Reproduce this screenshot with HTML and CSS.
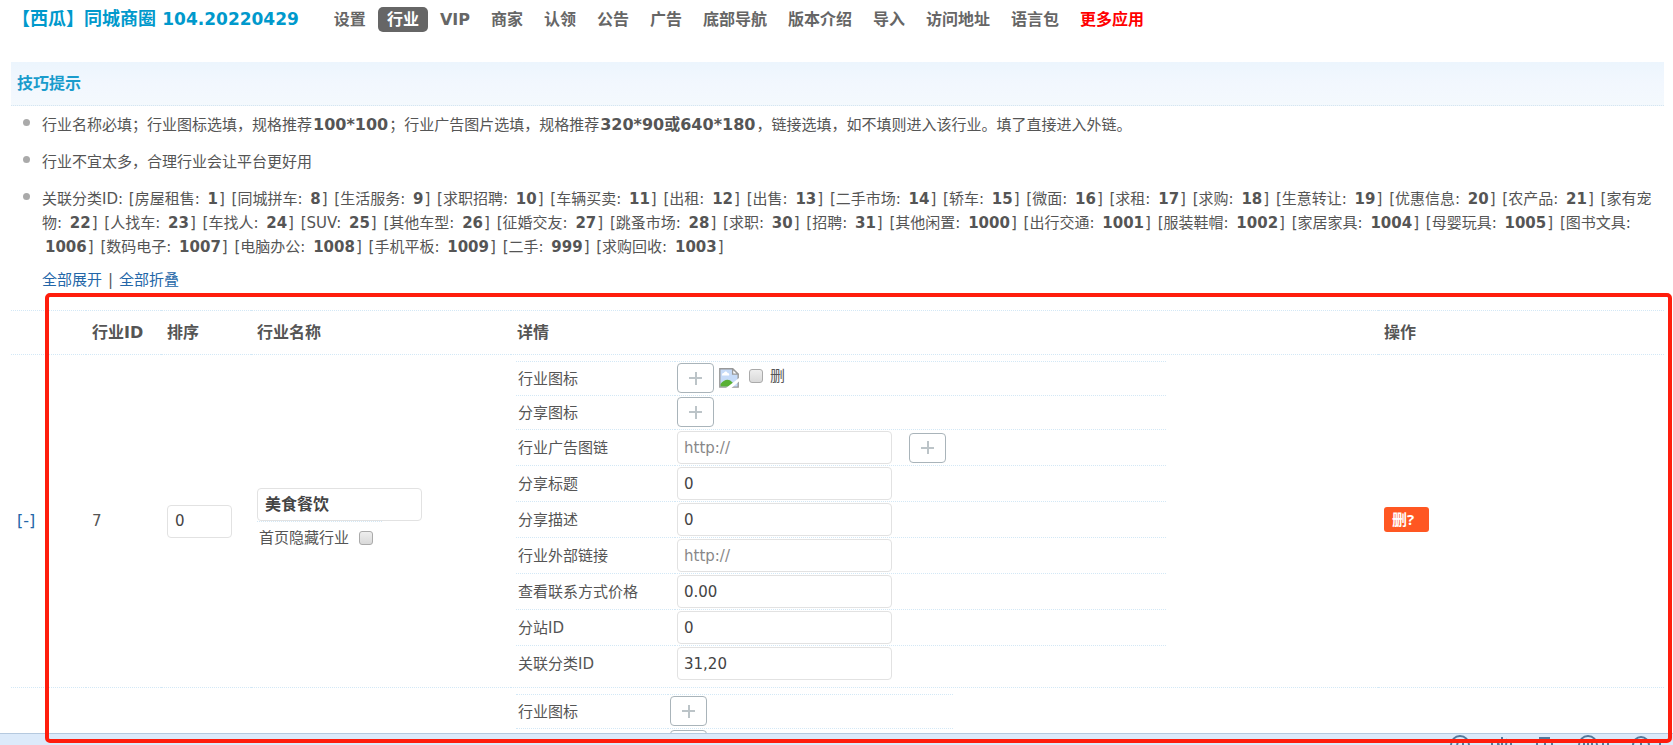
FILE: index.html
```html
<!DOCTYPE html>
<html lang="zh-CN">
<head>
<meta charset="utf-8">
<title>【西瓜】同城商圈</title>
<link rel="stylesheet" href="styles.css">
</head>
<body>
<header class="top">
  <h1 class="title">【西瓜】同城商圈 <span class="version">104.20220429</span></h1>
  <nav class="nav">
    <a href="#">设置</a><a href="#" class="current">行业</a><a href="#">VIP</a><a href="#">商家</a><a href="#">认领</a><a href="#">公告</a><a href="#">广告</a><a href="#">底部导航</a><a href="#">版本介绍</a><a href="#">导入</a><a href="#">访问地址</a><a href="#">语言包</a><a href="#" class="more">更多应用</a>
  </nav>
</header>
<main class="main">
  <h2 class="tips-head">技巧提示</h2>
  <ul class="tips">
    <li>行业名称必填；行业图标选填，规格推荐<b class="size">100*100</b>；行业广告图片选填，规格推荐<b class="size">320*90或640*180</b>，链接选填，如不填则进入该行业。填了直接进入外链。</li>
    <li>行业不宜太多，合理行业会让平台更好用</li>
    <li>关联分类ID:
      <span>[房屋租售: <b>1</b>]</span>
      <span>[同城拼车: <b>8</b>]</span>
      <span>[生活服务: <b>9</b>]</span>
      <span>[求职招聘: <b>10</b>]</span>
      <span>[车辆买卖: <b>11</b>]</span>
      <span>[出租: <b>12</b>]</span>
      <span>[出售: <b>13</b>]</span>
      <span>[二手市场: <b>14</b>]</span>
      <span>[轿车: <b>15</b>]</span>
      <span>[微面: <b>16</b>]</span>
      <span>[求租: <b>17</b>]</span>
      <span>[求购: <b>18</b>]</span>
      <span>[生意转让: <b>19</b>]</span>
      <span>[优惠信息: <b>20</b>]</span>
      <span>[农产品: <b>21</b>]</span>
      <span>[家有宠物: <b>22</b>]</span>
      <span>[人找车: <b>23</b>]</span>
      <span>[车找人: <b>24</b>]</span>
      <span>[SUV: <b>25</b>]</span>
      <span>[其他车型: <b>26</b>]</span>
      <span>[征婚交友: <b>27</b>]</span>
      <span>[跳蚤市场: <b>28</b>]</span>
      <span>[求职: <b>30</b>]</span>
      <span>[招聘: <b>31</b>]</span>
      <span>[其他闲置: <b>1000</b>]</span>
      <span>[出行交通: <b>1001</b>]</span>
      <span>[服装鞋帽: <b>1002</b>]</span>
      <span>[家居家具: <b>1004</b>]</span>
      <span>[母婴玩具: <b>1005</b>]</span>
      <span>[图书文具: <b>1006</b>]</span>
      <span>[数码电子: <b>1007</b>]</span>
      <span>[电脑办公: <b>1008</b>]</span>
      <span>[手机平板: <b>1009</b>]</span>
      <span>[二手: <b>999</b>]</span>
      <span>[求购回收: <b>1003</b>]</span>
    </li>
  </ul>
  <p class="toggles"><a href="#">全部展开</a><span>|</span><a href="#">全部折叠</a></p>
  <table class="list">
    <colgroup><col class="c-fold"><col class="c-id"><col class="c-sort"><col class="c-name"><col class="c-detail"><col class="c-action"></colgroup>
    <thead>
      <tr><th></th><th>行业ID</th><th>排序</th><th>行业名称</th><th>详情</th><th>操作</th></tr>
    </thead>
    <tbody>
      <tr>
        <td><a class="fold" href="#">[-]</a></td>
        <td>7</td>
        <td><input class="field sort" type="text" value="0" aria-label="排序"></td>
        <td>
          <input class="field name" type="text" value="美食餐饮" aria-label="行业名称">
          <div class="hide-row"><label for="hide7">首页隐藏行业</label><input class="check" type="checkbox" id="hide7"></div>
        </td>
        <td class="detail">
          <table class="inner">
            <tr class="short"><td>行业图标</td><td><div class="cell"><button class="plus" type="button" aria-label="上传行业图标"></button>
              <svg class="broken" viewBox="0 0 20 20" aria-hidden="true"><path d="M.8.8h12.8l5.6 5.4v12.9H.8z" fill="#c6dbf8" stroke="#999" stroke-width="1.4"/><path d="M3 7c0-2 1.500-2 2-2 .5-2 3-2 3.500 0 2 0 2 2 1.500 2.500H3z" fill="#fff"/><path d="M1.500 18.400V16c3-4 8-6 11.500-2l2 2-2 2.400z" fill="#58b035"/><path d="M13.600.8v5.400h5.600z" fill="#fff" stroke="#999" stroke-width="1.300"/><path d="M7 20 20 10v3.500L12.500 20z" fill="#fff"/></svg>
              <label class="del"><input class="check" type="checkbox">删</label></div></td></tr>
            <tr class="short"><td>分享图标</td><td><button class="plus" type="button" aria-label="上传分享图标"></button></td></tr>
            <tr><td><label for="f1">行业广告图链</label></td><td><div class="cell wide"><input class="field" id="f1" type="text" placeholder="http://"><button class="plus" type="button" aria-label="上传广告图"></button></div></td></tr>
            <tr><td><label for="f2">分享标题</label></td><td><input class="field" id="f2" type="text" value="0"></td></tr>
            <tr><td><label for="f3">分享描述</label></td><td><input class="field" id="f3" type="text" value="0"></td></tr>
            <tr><td><label for="f4">行业外部链接</label></td><td><input class="field" id="f4" type="text" placeholder="http://"></td></tr>
            <tr><td><label for="f5">查看联系方式价格</label></td><td><input class="field" id="f5" type="text" value="0.00"></td></tr>
            <tr><td><label for="f6">分站ID</label></td><td><input class="field" id="f6" type="text" value="0"></td></tr>
            <tr><td><label for="f7">关联分类ID</label></td><td><input class="field" id="f7" type="text" value="31,20"></td></tr>
          </table>
        </td>
        <td class="action"><button class="delete" type="button">删?</button></td>
      </tr>
      <tr>
        <td></td><td></td><td></td><td></td>
        <td class="detail">
          <table class="inner narrow">
            <tr class="short"><td>行业图标</td><td><button class="plus" type="button" aria-label="上传行业图标"></button></td></tr>
            <tr class="short"><td></td><td><button class="plus" type="button" aria-label="上传分享图标"></button></td></tr>
          </table>
        </td>
        <td></td>
      </tr>
    </tbody>
  </table>
</main>
<footer class="status">
  <svg class="status-icons" viewBox="0 0 226 11" aria-hidden="true">
    <g fill="none" stroke="#54799b" stroke-width="2">
      <path d="M4 11A9 9 0 0 1 22 11M10 11l1-3h3M16 6v5"/>
      <path d="M45 8h6v3M45 8v3M55 3v8M50 6l2 5M60 5l-1 6M64 6v5"/>
      <path d="M90 11V7h15v4M93 7V4h9v3M98 9v2"/>
      <path d="M132 11A9 9 0 0 1 150 11M137 7v4M141 5v6M145 7v4M156 7v4M161 7v4M156 7h5"/>
      <path d="M186 11A8 8 0 0 1 202 11M194 7v4M213 11V7h5"/>
    </g>
  </svg>
</footer>
<div class="marker"></div>
</body>
</html>
```
FILE: styles.css
```css
* { box-sizing: border-box; }
html, body { height: 100%; }
body {
  margin: 0;
  display: flex;
  flex-direction: column;
  position: relative;
  overflow: hidden;
  background: #fff;
  color: #555;
  font: 15px/24px "DejaVu Sans", "Noto Sans CJK SC", sans-serif;
}
a { color: #2366a8; text-decoration: none; }
.top {
  display: flex;
  align-items: center;
  flex: none;
  height: 38px;
  padding-left: 12px;
  margin-bottom: 24px;
  white-space: nowrap;
}
.title { margin: 0 26px 0 0; font-size: 18px; color: #0099cc; }
.version { font-size: 17px; }
.nav { display: flex; gap: 3px; }
.nav a {
  padding: 0 9px;
  border-radius: 5px;
  color: #666;
  font-size: 16px;
  line-height: 25px;
  font-weight: bold;
}
.nav .current { background: #666; color: #fff; }
.nav .more { color: #f00; }
.main { flex: 1; min-height: 0; overflow: hidden; padding: 0 9px 0 11px; }
.tips-head {
  margin: 0;
  padding: 0 6px;
  border-bottom: 1px dotted #d6e6f0;
  background: linear-gradient(#ecf5fd, #f2f7fe 50%, #f4f9fd);
  color: #1a9ccc;
  font-size: 16px;
  line-height: 43px;
}
.tips {
  display: flex;
  flex-direction: column;
  gap: 13px;
  margin: 0;
  padding: 7px 6px 9px 31px;
  list-style: none;
}
.tips li { position: relative; }
.tips li::before {
  content: "";
  position: absolute;
  left: -19px;
  top: 6px;
  width: 7px;
  height: 7px;
  border-radius: 50%;
  background: #aaa;
}
.tips span { margin: 0 1px; }
.tips b { margin: 0 1px 0 3px; }
.tips .size { margin: 0 1px; font-size: 16px; }
.toggles { display: flex; gap: 6px; margin: 0 0 18px 31px; }
.list { width: 100%; table-layout: fixed; border-collapse: separate; border-spacing: 0; }
.c-fold, .c-id { width: 75px; }
.c-sort { width: 90px; }
.c-name { width: 260px; }
.c-action { width: 286px; }
.fold { font-size: 16px; }
.list th, .list td { padding: 0 6px; border-top: 1px dotted #d3e8f6; text-align: left; }
.list th { height: 44px; font-size: 16px; }
.list .detail { padding: 6px 5px; }
.list .action { padding-bottom: 3px; }
.list .inner { width: 650px; max-width: 100%; border-collapse: separate; border-spacing: 0; table-layout: fixed; }
.inner td { height: 36px; padding: 1px 2px; }
.inner td:first-child { width: 159px; }
.inner .short td { height: 34px; }
.inner td:last-child { vertical-align: top; }
.list .narrow { width: 437px; }
.narrow td:first-child { width: 152px; }
.cell { display: flex; align-items: center; gap: 5px; }
.wide { gap: 17px; }
.field {
  display: block;
  width: 215px;
  height: 33px;
  padding: 0 6px;
  border: 1px solid #e2e2e2;
  border-radius: 4px;
  background: #fff;
  color: #444;
  font: inherit;
}
.field::placeholder { color: #888; }
.sort { width: 65px; padding: 0 7px; }
.name { width: 165px; padding: 0 7px 2px; font-size: 16px; font-weight: bold; }
.hide-row {
  display: flex;
  align-items: center;
  gap: 10px;
  width: 125px;
  height: 34px;
  padding-left: 2px;
  border-top: 1px dotted #d3e8f6;
  white-space: nowrap;
}
.check {
  appearance: none;
  flex: none;
  width: 14px;
  height: 14px;
  margin: 0;
  border: 1px solid #aaa;
  border-radius: 3px;
  background: linear-gradient(#eee, #d9d9d9);
}
.del { display: flex; align-items: center; gap: 7px; margin: 0 0 4px 5px; }
.plus {
  display: block;
  flex: none;
  width: 37px;
  height: 30px;
  padding: 0;
  border: 1px solid #a9b4ba;
  border-radius: 4px;
  background:
    linear-gradient(#bcc4c8, #bcc4c8) center / 13px 2px no-repeat,
    linear-gradient(#bcc4c8, #bcc4c8) center / 2px 13px no-repeat,
    #fff;
}
.broken { flex: none; width: 20px; height: 20px; }
.delete {
  display: block;
  width: 45px;
  height: 25px;
  padding: 0 8px;
  border: 0;
  border-radius: 3px;
  background: #ff5722;
  color: #fff;
  font: bold 15px/25px "Open Sans", "Noto Sans CJK SC", sans-serif;
  text-align: left;
}
.status {
  display: flex;
  justify-content: flex-end;
  flex: none;
  height: 12px;
  border-top: 1px solid #b5c9df;
  background: #dceafa;
}
.status-icons { width: 226px; height: 11px; }
.marker {
  position: absolute;
  inset: 293px 1px 2px 45px;
  border: 4px solid #ff1d0d;
  border-radius: 5px;
  pointer-events: none;
}
```
